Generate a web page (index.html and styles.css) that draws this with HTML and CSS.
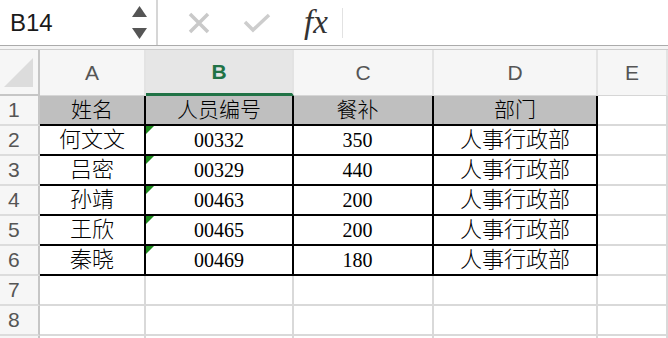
FILE: index.html
```html
<!DOCTYPE html>
<html>

<head>
    <meta charset="utf-8">
    <title>Sheet1</title>
    <link rel="stylesheet" href="styles.css">
</head>

<body>
    <div class="formulaBar">
        <div class="nameBox">
            <span class="cellName">B14</span>
            <svg class="spin" width="15" height="36" viewBox="0 0 15 36">
                <polygon points="7.5,1 15,12 0,12" fill="#555" />
                <polygon points="0,23 15,23 7.5,34" fill="#555" />
            </svg>
        </div>
        <div class="barSep"></div>
        <svg class="btnCancel" width="22" height="22" viewBox="0 0 22 22">
            <path d="M2 2 L20 20 M20 2 L2 20" stroke="#c9c9c9" stroke-width="3.5" fill="none" />
        </svg>
        <svg class="btnOk" width="28" height="20" viewBox="0 0 28 20">
            <polyline points="2,9 10,17 26,2" stroke="#cdcdcd" stroke-width="3.5" fill="none" />
        </svg>
        <span class="fx">fx</span>
        <div class="barSep light"></div>
    </div>
    <div class="strip"></div>

    <div class="sheet">
        <!-- column headers -->
        <div class="corner">
            <svg width="32" height="31" viewBox="0 0 32 31">
                <polygon points="30,1 30,30 1,30" fill="#dcdcdc" />
            </svg>
        </div>
        <div class="ch">A</div>
        <div class="ch active">B</div>
        <div class="ch">C</div>
        <div class="ch">D</div>
        <div class="ch">E</div>

        <div class="rh">1</div>
        <div class="c b head">姓名</div>
        <div class="c b head">人员编号</div>
        <div class="c b head shift">餐补</div>
        <div class="c b head">部门</div>
        <div class="c"></div>

        <div class="rh">2</div>
        <div class="c b">何文文</div>
        <div class="c b num tri">00332</div>
        <div class="c b num shift">350</div>
        <div class="c b">人事行政部</div>
        <div class="c"></div>

        <div class="rh">3</div>
        <div class="c b">吕密</div>
        <div class="c b num tri">00329</div>
        <div class="c b num shift">440</div>
        <div class="c b">人事行政部</div>
        <div class="c"></div>

        <div class="rh">4</div>
        <div class="c b">孙靖</div>
        <div class="c b num tri">00463</div>
        <div class="c b num shift">200</div>
        <div class="c b">人事行政部</div>
        <div class="c"></div>

        <div class="rh">5</div>
        <div class="c b">王欣</div>
        <div class="c b num tri">00465</div>
        <div class="c b num shift">200</div>
        <div class="c b">人事行政部</div>
        <div class="c"></div>

        <div class="rh">6</div>
        <div class="c b">秦晓</div>
        <div class="c b num tri">00469</div>
        <div class="c b num shift">180</div>
        <div class="c b">人事行政部</div>
        <div class="c"></div>

        <div class="rh">7</div>
        <div class="c"></div>
        <div class="c"></div>
        <div class="c"></div>
        <div class="c"></div>
        <div class="c"></div>

        <div class="rh">8</div>
        <div class="c"></div>
        <div class="c"></div>
        <div class="c"></div>
        <div class="c"></div>
        <div class="c"></div>

        <div class="rh"></div>
        <div class="c"></div>
        <div class="c"></div>
        <div class="c"></div>
        <div class="c"></div>
        <div class="c"></div>
    </div>
</body>

</html>
```

FILE: styles.css
```css
body {
    margin: 0;
    width: 668px;
    height: 338px;
    overflow: hidden;
    background: #fff;
    font-family: "Liberation Sans", Arial, sans-serif;
}

/* formula bar */
.formulaBar {
    display: flex;
    align-items: center;
    height: 45px;
    border-bottom: 1px solid #ababab;
}

.nameBox {
    display: flex;
    align-items: center;
    justify-content: space-between;
    box-sizing: border-box;
    width: 156px;
    height: 100%;
    padding: 0 9px 0 10px;
}

.cellName {
    font-size: 24px;
    color: #1a1a1a;
}

.spin {
    display: block;
}

.barSep {
    width: 2px;
    height: 100%;
    background: #d6d6d6;
}

.barSep.light {
    width: 1px;
    height: 30px;
    margin-left: 14px;
    background: #e2e2e2;
}

.btnCancel {
    margin-left: 30px;
}

.btnOk {
    margin-left: 33px;
}

.fx {
    margin-left: 33px;
    font-family: "Liberation Serif", serif;
    font-style: italic;
    font-size: 33px;
    line-height: 1;
    color: #333;
}

.strip {
    height: 3px;
    border-bottom: 1px solid #cdcdcd;
    background: #f4f4f4;
}

/* grid */
.sheet {
    display: grid;
    grid-template-columns: 40px 106px 148px 140px 164px 1fr;
    grid-template-rows: 46px repeat(9, 30px);
}

.sheet > div {
    box-sizing: border-box;
    display: flex;
    align-items: center;
    justify-content: center;
}

.corner {
    background: #f6f6f6;
    border-right: 2px solid #c6c6c6;
    border-bottom: 2px solid #c6c6c6;
}

.ch {
    background: #f6f6f6;
    border-right: 2px solid #e3e3e3;
    border-bottom: 1px solid #d6d6d6;
    font-size: 21px;
    color: #555;
}

.ch.active {
    background: #e6e6e6;
    border-bottom: 3px solid #217346;
    color: #217346;
    font-weight: bold;
}

.rh {
    justify-content: flex-start !important;
    padding-left: 8px;
    background: #f6f6f6;
    border-right: 2px solid #c6c6c6;
    border-bottom: 2px solid #dcdcdc;
    font-size: 21px;
    color: #555;
}

.c {
    border-right: 2px solid #d9d9d9;
    border-bottom: 2px solid #d9d9d9;
    font-family: "Liberation Serif", "Noto Sans CJK SC", serif;
    font-size: 22px;
    font-weight: 300;
    line-height: 1;
    color: #000;
}

.c.b {
    border-right-color: #000;
    border-bottom-color: #000;
}

.c.head {
    background: #bfbfbf;
    font-size: 21px;
}

.c.num {
    font-size: 20px;
    font-weight: normal;
}

.c.shift {
    padding-right: 11px;
}

.c.tri {
    position: relative;
}

.c.tri::before {
    content: "";
    position: absolute;
    top: 0;
    left: 0;
    border-top: 8px solid #1c8a1c;
    border-right: 8px solid transparent;
}
```
